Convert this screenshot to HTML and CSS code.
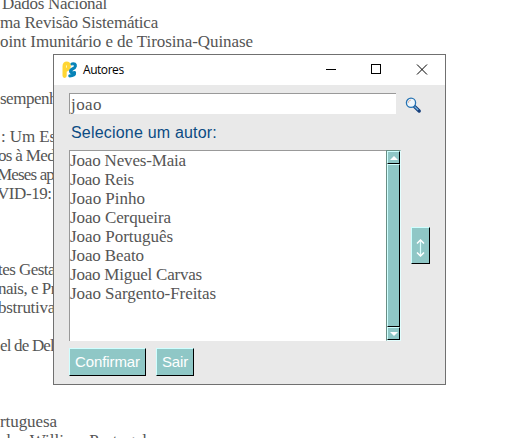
FILE: index.html
```
<!DOCTYPE html>
<html lang="pt">
<head>
<meta charset="utf-8">
<title>Autores</title>
<link rel="stylesheet" href="styles.css">
</head>
<body>
<div class="page">
<div data-w="107" class="in2">Dados Nacional</div>
<div data-w="158">ma Revisão Sistemática</div>
<div data-w="253">oint Imunitário e de Tirosina-Quinase</div>
<div></div><div></div>
<div data-w="57">sempenh</div>
<div></div>
<div data-w="56" class="in1">: Um Es</div>
<div data-w="55" class="out2">os à Med</div>
<div data-w="54" class="out3">Meses ap</div>
<div data-w="58" class="out3">VID-19: '</div>
<div></div><div></div><div></div>
<div data-w="55" class="out2">tes Gesta</div>
<div data-w="56" class="out2">nais, e Pr</div>
<div data-w="55" class="out2">bstrutiva</div>
<div></div>
<div data-w="54">el de Del</div>
<div></div><div></div><div></div>
<div data-w="57">rtuguesa</div>
<div data-w="147" class="in2">dos William Portugal</div>
</div>
<main class="window">
<header class="titlebar">
<svg class="logo" width="16" height="18" viewBox="0 0 16 18" fill="none" stroke-linecap="round" stroke-linejoin="round">
<path d="M2.600 14.800V5.200Q2.600 2.600 5 2.600Q7 2.600 6.700 5.500Q6.200 8.500 3.400 9" stroke="#ffd634" stroke-width="4.200"/>
<path d="M10 3Q13.700 2.200 13.300 5.200Q12.800 7.200 10.500 8Q8.200 9 8.700 10.800Q9.300 12.200 12.500 11.700Q13 14.800 7.800 14.800" stroke="#0783b7" stroke-width="3.200"/>
<path d="M4.500 4.800v1.500M10.800 4.200l.5 1" stroke="#fff" stroke-width=".7"/>
</svg>
<span class="title">Autores</span>
<svg class="controls" width="116" height="30" viewBox="0 0 116 30" fill="none" stroke="#000" shape-rendering="crispEdges">
<path d="M0 14.5h10M45.500 9.500h9v9h-9z"/><path d="M91 9.500l10 10M101 9.500l-10 10" shape-rendering="auto"/>
</svg>
</header>
<div class="search">
<div class="field"><span data-w="31">joao</span></div>
<svg width="17" height="17" viewBox="0 0 17 17">
<path d="M9.500 9.500l4.700 4.500" stroke="#173f7c" stroke-width="3.400" stroke-linecap="round"/>
<path d="M9.500 9.500l3.700 3.500" stroke="#70b5e5" stroke-width="1.300"/>
<circle cx="6" cy="5.800" r="4.600" fill="#eef6fc" stroke="#2673b3" stroke-width="1.300"/>
<path d="M3.200 6Q3.200 3.300 6 3" fill="none" stroke="#d3aa99" stroke-width=".8"/>
</svg>
</div>
<div class="prompt"><span data-w="146">Selecione um autor:</span></div>
<div class="content">
<div class="list">
<div><span data-w="116">Joao Neves-Maia</span></div>
<div><span data-w="64">Joao Reis</span></div>
<div><span data-w="75">Joao Pinho</span></div>
<div><span data-w="101">Joao Cerqueira</span></div>
<div><span data-w="103">Joao Português</span></div>
<div><span data-w="74">Joao Beato</span></div>
<div><span data-w="132">Joao Miguel Carvas</span></div>
<div><span data-w="146">Joao Sargento-Freitas</span></div>
</div>
<div class="scrollbar">
<div class="arrow"><svg width="8" height="4" viewBox="0 0 8 4"><path d="M0 4L4 0L8 4z" fill="#fff"/></svg></div>
<div class="thumb"></div>
<div class="arrow"><svg width="8" height="4" viewBox="0 0 8 4"><path d="M0 0h8L4 4z" fill="#fff"/></svg></div>
</div>
<div class="btn sort"><svg width="9" height="18" viewBox="0 0 9 18" fill="none" stroke="#fff"><path d="M4.500 1v16" stroke="#d9ffff" stroke-width="1.200"/><path d="M1 4.500L4.500 1L8 4.500M1 13.500L4.500 17L8 13.500" stroke-width="1.500"/></svg></div>
</div>
<div class="actions">
<div class="btn confirm"><span data-w="65">Confirmar</span></div>
<div class="btn exit"><span data-w="26">Sair</span></div>
</div>
</main>
<script src="fit.js"></script>
</body>
</html>
```
FILE: styles.css
```
* { box-sizing: border-box; }
body { margin: 0; width: 510px; height: 438px; overflow: hidden; background: #fff; position: relative; }
svg { display: block; flex: none; }
.page, .field, .list { font: 17px/19px "Liberation Serif", serif; color: #555; white-space: nowrap; }
.page { margin-top: -6px; height: 444px; overflow: hidden; }
.page div { height: 19px; width: max-content; }
.in1 { margin-left: 1px; }
.in2 { margin-left: 2px; }
.out2 { margin-left: -2px; }
.out3 { margin-left: -3px; }
.window { position: absolute; left: 53px; top: 54px; width: 393px; height: 331px; border: 1px solid #707070; background: #e9e9e9; display: flex; flex-direction: column; }
.titlebar { height: 30px; background: #fff; display: flex; align-items: center; padding-left: 8px; flex: none; }
.title { font: 12px/18px "Open Sans", "Noto Sans", sans-serif; letter-spacing: -.45px; color: #000; margin-left: 5px; flex: 1; }
.controls { margin-right: 3px; }
.search { display: flex; margin: 8px 0 0 15px; height: 21px; gap: 9px; align-items: center; }
.search svg { margin-top: 4px; }
.field { width: 327px; height: 21px; background: #fff; border: 1px solid #999; border-right: 0; border-bottom: 0; padding: 1px 0 0 1px; }
.prompt { font: 16px/20px "Liberation Sans", sans-serif; color: #0b4b83; margin: 9px 0 0 17px; height: 20px; white-space: nowrap; }
.content { display: flex; margin: 7px 0 0 15px; height: 191px; }
.list { width: 317px; background: #fff; border: 1px solid #999; border-right: 0; border-bottom: 0; }
.list div { height: 19px; }
.scrollbar { width: 15px; height: 191px; display: flex; flex-direction: column; border: 1px solid #698e84; border-right-color: #e3ffff; border-bottom-color: #e3ffff; }
.arrow, .thumb { background: #8fc7c6; border: 1px solid #cfffff; border-right-color: #000; border-bottom-color: #000; }
.arrow { height: 13px; display: flex; align-items: center; justify-content: center; flex: none; }
.thumb { flex: 1; }
.btn { background: #8fc7c6; border: 1px solid #cfffff; border-right-color: #000; border-bottom-color: #000; color: #fff; font: 15px/26px "Liberation Sans", sans-serif; display: flex; align-items: center; justify-content: center; white-space: nowrap; }
.sort { width: 19px; height: 37px; margin: 77px 0 0 10px; padding-top: 4px; }
.actions { display: flex; gap: 10px; margin: 7px 0 0 15px; }
.confirm { width: 77px; height: 28px; }
.exit { width: 38px; height: 28px; }
```
FILE: fit.js
```
// Spread each label's letters over the width given in data-w.
document.querySelectorAll('[data-w]').forEach(function (el) {
  var range = document.createRange();
  range.selectNodeContents(el);
  var left = el.getBoundingClientRect().left;
  var natural = range.getBoundingClientRect().width;
  var target = el.closest('.page') ? Number(el.dataset.w) - left : Number(el.dataset.w);
  el.style.letterSpacing = (target - natural) / el.textContent.length + 'px';
});
```
